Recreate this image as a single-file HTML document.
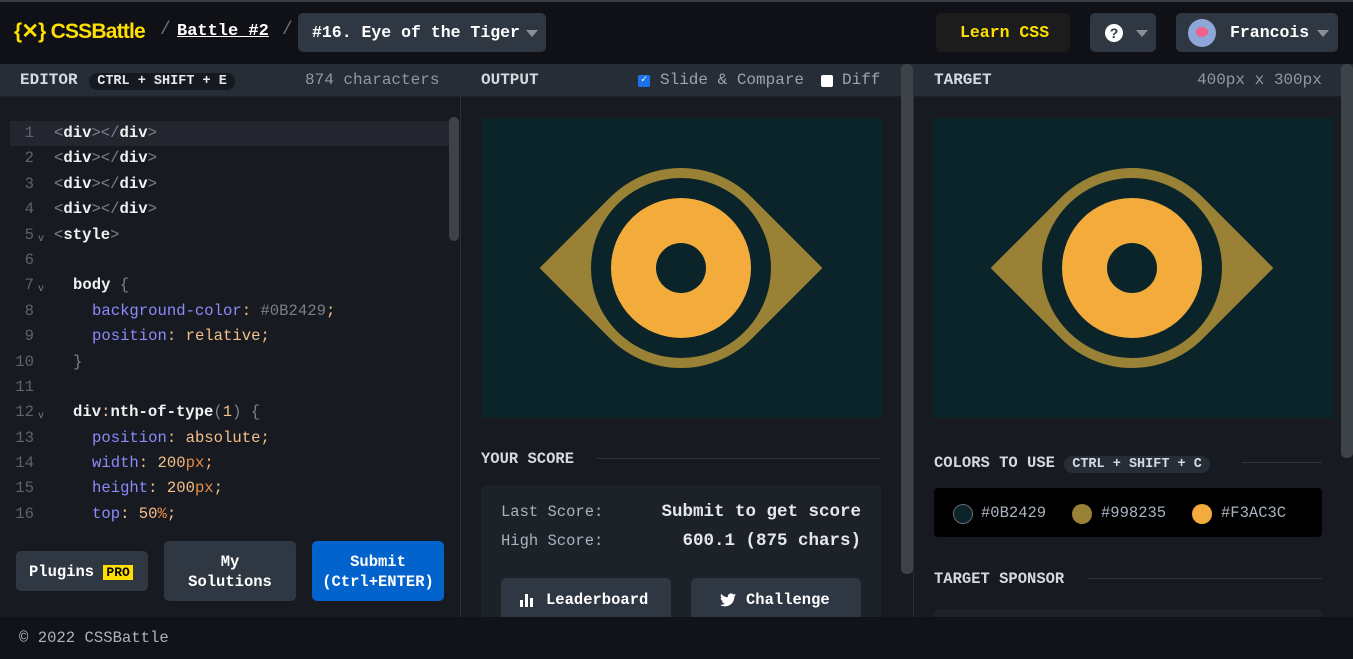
<!DOCTYPE html>
<html><head><meta charset="utf-8"><style>
*{box-sizing:border-box;margin:0;padding:0}
body{width:1353px;height:659px;overflow:hidden;background:#171a21;font-family:"Liberation Mono",monospace;color:#e6e8ea;position:relative}
.hdr{position:absolute;left:0;top:0;width:1353px;height:64px;background:#0f1116;border-top:2px solid #3a3f47}
.a{position:absolute}
.bold{font-weight:bold}
.logo{left:14px;top:19px;color:#ffdf00;font-family:"Liberation Sans",sans-serif;font-weight:bold;font-size:21px;letter-spacing:-0.8px}
.sep{color:#6c727b;font-size:18px}
.btn{border-radius:5px;background:#2f3742}
.ph{position:absolute;top:64px;height:33px;background:#262d36;border-bottom:1px solid #1d2229;font-size:16px;line-height:33px}
.code{font-size:15.6px;line-height:25.4px}
.ln{position:absolute;left:10px;width:24px;text-align:right;color:#5d636c}
.k{color:#8d8af9}.v{color:#f4c08a}.u{color:#e88e4a}.g{color:#7a7f88}.w{color:#f0f2f4;font-weight:bold}
.eye{position:absolute;width:400px;height:300px;background:#0b2429;overflow:hidden}
.eye div{position:absolute;border-radius:50%}
.foot{position:absolute;left:0;top:617px;width:1353px;height:42px;background:#111318;color:#aab4c0;font-size:15.6px;padding:12px 19px}
</style></head><body>
<div class="hdr"></div>
<div class="a logo">{✕}&nbsp;CSSBattle</div>
<div class="a sep" style="left:160px;top:20px">/</div>
<div class="a bold" style="left:177px;top:22px;font-size:17px;text-decoration:underline;color:#fff">Battle #2</div>
<div class="a sep" style="left:282px;top:20px">/</div>
<div class="a btn" style="left:298px;top:13px;width:248px;height:39px"></div>
<div class="a bold" style="left:312px;top:23px;font-size:16.5px;color:#fff">#16. Eye of the Tiger</div>
<div class="a" style="left:526px;top:30px;border:6px solid transparent;border-top:7px solid #8a9098"></div>
<div class="a" style="left:936px;top:13px;width:134px;height:39px;background:#1c1c1c;border-radius:5px"></div>
<div class="a bold" style="left:960px;top:23px;font-size:16.5px;color:#ffdf00">Learn CSS</div>
<div class="a btn" style="left:1090px;top:13px;width:66px;height:39px"></div>
<div class="a" style="left:1105px;top:24px;width:18px;height:18px;border-radius:50%;background:#fff;color:#2f3742;font:bold 14px 'Liberation Sans';text-align:center;line-height:18px">?</div>
<div class="a" style="left:1136px;top:30px;border:6px solid transparent;border-top:7px solid #8a9098"></div>
<div class="a btn" style="left:1176px;top:13px;width:162px;height:39px"></div>
<div class="a" style="left:1188px;top:19px;width:28px;height:28px;border-radius:50%;background:#8fa7d8"><div class="a" style="left:8px;top:8px;width:12px;height:10px;border-radius:50%;background:#f2608a"></div></div>
<div class="a bold" style="left:1230px;top:23px;font-size:16.5px;color:#fff">Francois</div>
<div class="a" style="left:1317px;top:30px;border:6px solid transparent;border-top:7px solid #8a9098"></div>

<!-- editor -->
<div class="ph" style="left:0;width:460px;padding-left:20px"><span class="bold" style="color:#d5dae0">EDITOR</span> <span class="bold" style="background:#151a20;border-radius:10px;padding:1px 8px;font-size:13.5px;margin-left:2px">CTRL + SHIFT + E</span><span style="position:absolute;left:305px;color:#8f99a5">874 characters</span></div>
<div class="a" style="left:10px;top:121px;width:440px;height:25px;background:#23262e"></div>
<div class="a" style="left:449px;top:117px;width:10px;height:124px;background:#3e434a;border-radius:5px"></div>
<div class="a code" style="left:0;top:121px;width:450px">
<div style="position:relative;height:25.4px"><span class="ln">1</span><span class="a" style="left:54px"><span class="g">&lt;</span><span class="w">div</span><span class="g">&gt;&lt;/</span><span class="w">div</span><span class="g">&gt;</span></span></div>
<div style="position:relative;height:25.4px"><span class="ln">2</span><span class="a" style="left:54px"><span class="g">&lt;</span><span class="w">div</span><span class="g">&gt;&lt;/</span><span class="w">div</span><span class="g">&gt;</span></span></div>
<div style="position:relative;height:25.4px"><span class="ln">3</span><span class="a" style="left:54px"><span class="g">&lt;</span><span class="w">div</span><span class="g">&gt;&lt;/</span><span class="w">div</span><span class="g">&gt;</span></span></div>
<div style="position:relative;height:25.4px"><span class="ln">4</span><span class="a" style="left:54px"><span class="g">&lt;</span><span class="w">div</span><span class="g">&gt;&lt;/</span><span class="w">div</span><span class="g">&gt;</span></span></div>
<div style="position:relative;height:25.4px"><span class="ln">5</span><span class="a g" style="left:38px;font-size:10px;top:4px">v</span><span class="a" style="left:54px"><span class="g">&lt;</span><span class="w">style</span><span class="g">&gt;</span></span></div>
<div style="position:relative;height:25.4px"><span class="ln">6</span></div>
<div style="position:relative;height:25.4px"><span class="ln">7</span><span class="a g" style="left:38px;font-size:10px;top:4px">v</span><span class="a" style="left:73px"><span class="w">body</span> <span class="g">{</span></span></div>
<div style="position:relative;height:25.4px"><span class="ln">8</span><span class="a" style="left:92px"><span class="k">background-color</span><span class="v">:</span> <span class="g">#0B2429</span><span class="v">;</span></span></div>
<div style="position:relative;height:25.4px"><span class="ln">9</span><span class="a" style="left:92px"><span class="k">position</span><span class="v">: relative;</span></span></div>
<div style="position:relative;height:25.4px"><span class="ln">10</span><span class="a g" style="left:73px">}</span></div>
<div style="position:relative;height:25.4px"><span class="ln">11</span></div>
<div style="position:relative;height:25.4px"><span class="ln">12</span><span class="a g" style="left:38px;font-size:10px;top:4px">v</span><span class="a" style="left:73px"><span class="w">div</span><span class="v">:</span><span class="w">nth-of-type</span><span class="g">(</span><span class="v">1</span><span class="g">) {</span></span></div>
<div style="position:relative;height:25.4px"><span class="ln">13</span><span class="a" style="left:92px"><span class="k">position</span><span class="v">: absolute;</span></span></div>
<div style="position:relative;height:25.4px"><span class="ln">14</span><span class="a" style="left:92px"><span class="k">width</span><span class="v">: 200</span><span class="u">px</span><span class="v">;</span></span></div>
<div style="position:relative;height:25.4px"><span class="ln">15</span><span class="a" style="left:92px"><span class="k">height</span><span class="v">: 200</span><span class="u">px</span><span class="v">;</span></span></div>
<div style="position:relative;height:25.4px"><span class="ln">16</span><span class="a" style="left:92px"><span class="k">top</span><span class="v">: 50</span><span class="u">%</span><span class="v">;</span></span></div>
</div>
<div class="a" style="left:0;top:530px;width:449px;height:87px;background:#171a21"></div>
<div class="a btn" style="left:16px;top:551px;width:132px;height:40px"></div>
<div class="a bold" style="left:29px;top:563px;font-size:15.5px;color:#fff">Plugins <span style="background:#ffdf00;color:#000;font-size:13px;padding:0 3px">PRO</span></div>
<div class="a btn" style="left:164px;top:541px;width:132px;height:60px;text-align:center;font-weight:bold;font-size:15.5px;line-height:20px;padding-top:11px;color:#fff">My<br>Solutions</div>
<div class="a" style="left:312px;top:541px;width:132px;height:60px;background:#0263cc;border-radius:5px;text-align:center;font-weight:bold;font-size:15.5px;line-height:20px;padding-top:11px;color:#fff;white-space:nowrap">Submit<br>(Ctrl+ENTER)</div>
<div class="a" style="left:460px;top:64px;width:1px;height:553px;background:#2a3039"></div>

<!-- output -->
<div class="ph" style="left:461px;width:452px;padding-left:20px"><span class="bold" style="color:#d5dae0">OUTPUT</span>
<span class="a" style="left:177px;top:11px;width:12px;height:12px;background:#1a73e8;border-radius:2px;color:#fff;font-size:10px;line-height:12px;text-align:center">✓</span>
<span class="a" style="left:199px;color:#9aa4b0">Slide &amp; Compare</span>
<span class="a" style="left:360px;top:11px;width:12px;height:12px;background:#fff;border-radius:2px"></span>
<span class="a" style="left:381px;color:#9aa4b0">Diff</span></div>
<div class="a" style="left:901px;top:64px;width:12px;height:510px;background:#3e434a;border-radius:5px"></div>
<div class="eye" style="left:482px;top:118px">
<div style="left:99px;top:50px;width:200px;height:200px;background:#998235;border-radius:100px 0 100px 0;transform:rotate(45deg)"></div>
<div style="left:109px;top:60px;width:180px;height:180px;background:#0b2429"></div>
<div style="left:129px;top:80px;width:140px;height:140px;background:#f3ac3c"></div>
<div style="left:174px;top:125px;width:50px;height:50px;background:#0b2429"></div>
</div>
<div class="a bold" style="left:481px;top:450px;font-size:15.5px;color:#d5dae0">YOUR SCORE</div>
<div class="a" style="left:597px;top:458px;width:284px;height:1px;background:#2c333c"></div>
<div class="a" style="left:481px;top:485px;width:400px;height:140px;background:#1d2128;border-radius:5px"></div>
<div class="a" style="left:501px;top:498px;font-size:15.5px;color:#aab4c0;line-height:29px">Last Score:<br>High Score:</div>
<div class="a bold" style="left:560px;top:498px;width:301px;text-align:right;font-size:17.5px;color:#e3e8ee;line-height:29px">Submit to get score<br>600.1 (875 chars)</div>
<div class="a btn" style="left:501px;top:578px;width:170px;height:45px"></div>
<svg class="a" style="left:520px;top:593px" width="16" height="14"><rect x="0" y="7" width="3" height="7" fill="#fff"/><rect x="5" y="1" width="3" height="13" fill="#fff"/><rect x="10" y="5" width="3" height="9" fill="#fff"/></svg>
<div class="a bold" style="left:546px;top:591px;font-size:15.5px;color:#fff">Leaderboard</div>
<div class="a btn" style="left:691px;top:578px;width:170px;height:45px"></div>
<svg class="a" style="left:720px;top:593px" width="16" height="14" viewBox="0 0 24 20"><path d="M24 2.4c-.9.4-1.8.7-2.8.8 1-.6 1.8-1.6 2.2-2.7-1 .6-2 1-3.1 1.2C19.4.7 18.1 0 16.6 0c-2.7 0-4.9 2.2-4.9 4.9 0 .4 0 .8.1 1.1C7.7 5.8 4.1 3.9 1.7.9c-.4.7-.7 1.6-.7 2.5 0 1.7.9 3.2 2.2 4.1-.8 0-1.6-.2-2.2-.6v.1c0 2.4 1.7 4.4 3.9 4.8-.4.1-.8.2-1.3.2-.3 0-.6 0-.9-.1.6 2 2.4 3.4 4.6 3.4-1.7 1.3-3.8 2.1-6.1 2.1-.4 0-.8 0-1.2-.1 2.2 1.4 4.8 2.2 7.5 2.2 9.1 0 14-7.5 14-14v-.6c1-.7 1.8-1.6 2.5-2.5z" fill="#fff"/></svg>
<div class="a bold" style="left:746px;top:591px;font-size:15.5px;color:#fff">Challenge</div>
<div class="a" style="left:913px;top:64px;width:1px;height:553px;background:#2a3039"></div>

<!-- target -->
<div class="ph" style="left:914px;width:439px;padding-left:20px"><span class="bold" style="color:#d5dae0">TARGET</span><span style="position:absolute;left:283px;color:#8f99a5">400px x 300px</span></div>
<div class="a" style="left:1341px;top:64px;width:12px;height:394px;background:#3e434a;border-radius:5px"></div>
<div class="eye" style="left:933px;top:118px">
<div style="left:99px;top:50px;width:200px;height:200px;background:#998235;border-radius:100px 0 100px 0;transform:rotate(45deg)"></div>
<div style="left:109px;top:60px;width:180px;height:180px;background:#0b2429"></div>
<div style="left:129px;top:80px;width:140px;height:140px;background:#f3ac3c"></div>
<div style="left:174px;top:125px;width:50px;height:50px;background:#0b2429"></div>
</div>
<div class="a bold" style="left:934px;top:454px;font-size:15.5px;color:#d5dae0">COLORS TO USE <span style="background:#262d36;border-radius:10px;padding:1px 8px;font-size:13.5px">CTRL + SHIFT + C</span></div>
<div class="a" style="left:1242px;top:462px;width:80px;height:1px;background:#2c333c"></div>
<div class="a" style="left:934px;top:488px;width:388px;height:49px;background:#000;border-radius:4px"></div>
<div class="a" style="left:953px;top:504px;width:20px;height:20px;border-radius:50%;background:#0b2429;border:1px solid #667"></div>
<div class="a" style="left:981px;top:504px;font-size:15.5px;color:#aab4c0">#0B2429</div>
<div class="a" style="left:1072px;top:504px;width:20px;height:20px;border-radius:50%;background:#998235"></div>
<div class="a" style="left:1101px;top:504px;font-size:15.5px;color:#aab4c0">#998235</div>
<div class="a" style="left:1192px;top:504px;width:20px;height:20px;border-radius:50%;background:#f3ac3c"></div>
<div class="a" style="left:1221px;top:504px;font-size:15.5px;color:#aab4c0">#F3AC3C</div>
<div class="a bold" style="left:934px;top:570px;font-size:15.5px;color:#d5dae0">TARGET SPONSOR</div>
<div class="a" style="left:1088px;top:578px;width:234px;height:1px;background:#2c333c"></div>
<div class="a" style="left:934px;top:609px;width:388px;height:20px;background:#1d2128;border-radius:5px"></div>

<div class="foot">© 2022 CSSBattle</div>
</body></html>
